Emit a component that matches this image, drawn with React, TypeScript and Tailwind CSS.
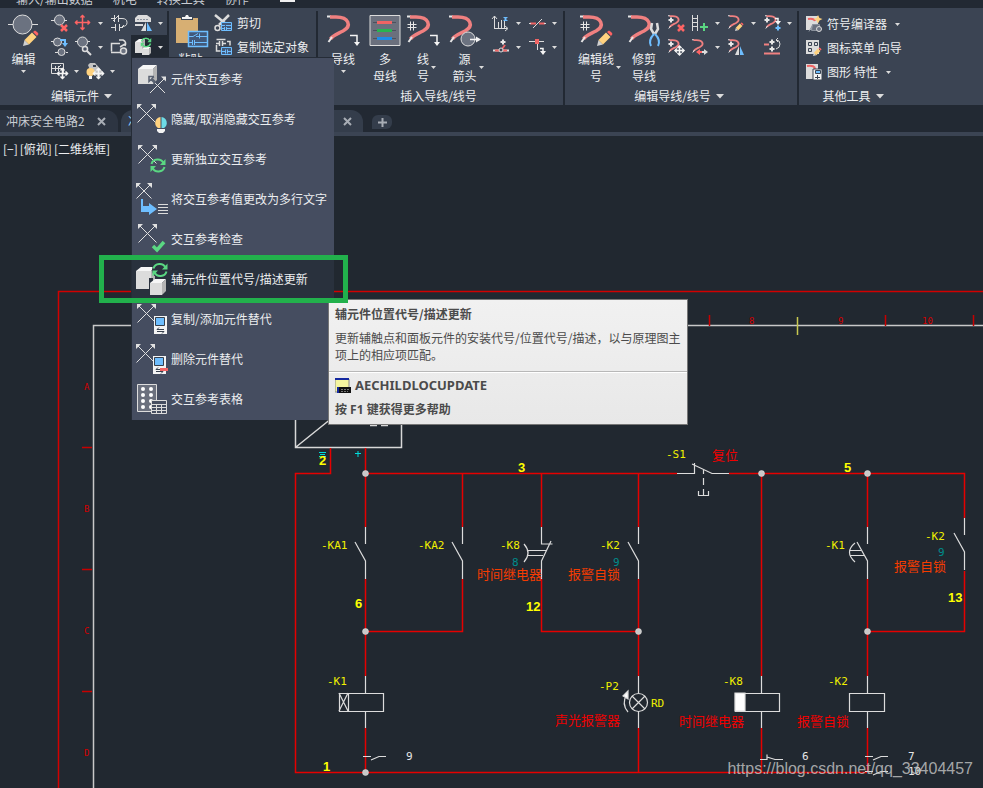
import type { ReactNode } from 'react';

type Point = { x: number; y: number };

const LIGHT = '#dcdcdc';
const PINK = '#f08080';
const BLUE = '#6ebeff';

/* ---------- icon parts ---------- */

function Icon({ size = 24, height, children }: { size?: number; height?: number; children: ReactNode }) {
  return (
    <svg
      width={size}
      height={height ?? size}
      viewBox={`0 0 ${size} ${height ?? size}`}
      fill="none"
      stroke={LIGHT}
      className="shrink-0 overflow-visible"
      aria-hidden="true"
    >
      {children}
    </svg>
  );
}

function Caret({ large = false }: { large?: boolean }) {
  return large ? (
    <svg width="8" height="5" viewBox="0 0 8 5" className="shrink-0" aria-hidden="true">
      <path d="M0 0h8L4 4.5z" fill="#dcdcdc" />
    </svg>
  ) : (
    <svg width="5" height="3" viewBox="0 0 5 3" className="shrink-0" aria-hidden="true">
      <path d="M0 0h5L2.500 3z" fill="#dcdcdc" />
    </svg>
  );
}

function Pencil({ x, y, scale = 1 }: Point & { scale?: number }) {
  return (
    <g transform={`translate(${x} ${y}) scale(${scale})`} stroke="none">
      <path d="M0 0L1.500-6 6-1.500z" fill="#d0d0d0" />
      <path d="M1.500-6L9-13.500 13.500-9 6-1.500z" fill="#ffd27f" />
      <path d="M10-14l2-1.500q3 1.500 3.500 3.500l-1.500 2z" fill="#ff6464" />
    </g>
  );
}

function Wire({ x = 0, y = 0, scale = 1 }: Partial<Point> & { scale?: number }) {
  return (
    <g transform={`translate(${x} ${y}) scale(${scale})`}>
      <path d="M0 1.500h4" stroke="#e6e6e6" strokeWidth="2" />
      <path d="M3 2h6C22 2 25 11 16 16 10 19 6 20 3.500 24" stroke={PINK} strokeWidth="3.500" />
      <path d="M5 22L1.500 27" stroke="#e6e6e6" strokeWidth="2" />
    </g>
  );
}

function Hash({ x, y, size = 9, color = '#e6e6e6' }: Point & { size?: number; color?: string }) {
  const a = Math.round(size / 3);
  const b = size - a;
  return (
    <path
      transform={`translate(${x + 0.5} ${y + 0.5})`}
      d={`M${a} 0v${size}M${b} 0v${size}M0 ${a}h${size}M0 ${b}h${size}`}
      stroke={color}
    />
  );
}

function MoveArrows({ x, y, r, color }: Point & { r: number; color: string }) {
  return (
    <g transform={`translate(${x} ${y})`} stroke={color} strokeWidth="1.500">
      <path d={`M0 ${-r}V${r}M${-r} 0H${r}`} />
      <path
        d={`M-2 ${2 - r}L0 ${-r}L2 ${2 - r}M-2 ${r - 2}L0 ${r}L2 ${r - 2}M${2 - r} -2L${-r} 0L${2 - r} 2M${r - 2} -2L${r} 0L${r - 2} 2`}
      />
    </g>
  );
}

function Cube({ x, y, w, h, depth }: Point & { w: number; h: number; depth: number }) {
  return (
    <g transform={`translate(${x} ${y})`} stroke="none">
      <path d={`M0 ${depth}H${w}V${h + depth}H0z`} fill="#dcdcdc" />
      <path d={`M0 ${depth}L${depth + 1} 0H${w + depth}L${w} ${depth}z`} fill="#f6f6f6" />
      <path d={`M${w} ${depth}L${w + depth} 0V${h}L${w} ${h + depth}z`} fill="#b4b4b4" />
    </g>
  );
}

function Refresh({ x, y, scale = 1 }: Point & { scale?: number }) {
  return (
    <g transform={`translate(${x} ${y}) scale(${scale})`}>
      <path d="M-6.500-1.500C-5-7 3-7.500 5.500-2.500M6.500 1.500C5 7-3 7.500-5.500 2.500" stroke="#5ad782" strokeWidth="2" />
      <path d="M7.500-6.500v6H2zM-7.500 6.500v-6H-2z" fill="#5ad782" stroke="none" />
    </g>
  );
}

function CrossArrows({ x, y, size = 18 }: Point & { size?: number }) {
  return (
    <g transform={`translate(${x} ${y})`} stroke="#e0e0e0">
      <path d={`M0 0L${size} ${size}M0 ${size}L${size} 0`} />
      <path d={`M-.5-.5h5l-5 5zM${size + 0.5}-.5h-5l5 5z`} fill="#e0e0e0" stroke="none" />
    </g>
  );
}

function Device({ x, y }: Point) {
  return (
    <g transform={`translate(${x} ${y})`}>
      <path d="M0 0h13v18H0z" fill="#f4f4f4" stroke="none" />
      <path d="M1.500 1.500h9v8h-9z" fill={BLUE} stroke="#37404d" />
      <path d="M3 13.500h7M3 13.500l2-2M3 15.500h7M10 15.500l-2 2" stroke="#37404d" />
    </g>
  );
}

function Turn({ x, y, size = 10 }: Point & { size?: number }) {
  return (
    <g transform={`translate(${x} ${y})`}>
      <path d={`M0 .5H${size - 3}V${size - 2}`} stroke="#f4f4f4" strokeWidth="1.500" />
      <path d={`M${size - 6} ${size - 3}h6l-3 4z`} fill="#f4f4f4" stroke="none" />
    </g>
  );
}

function Bulb({ x, y, r }: Point & { r: number }) {
  return (
    <g transform={`translate(${x} ${y})`} stroke="none">
      <path d={`M-.5 ${-r}A${r} ${r} 0 0 0 -3 ${r - 1}H-.5z`} fill="#ffd27f" />
      <path d={`M.5 ${-r}A${r} ${r} 0 0 1 3 ${r - 1}H.5z`} fill="#6edce6" />
      <path d={`M-4 ${r}H4V${r + 2}L2 ${r + 4}H-2L-4 ${r + 2}z`} fill="#f4f4f4" />
    </g>
  );
}

/* ---------- ribbon ---------- */

function ToolButton({ label, children }: { label: string; children: ReactNode }) {
  return (
    <button type="button" aria-label={label} className="flex h-6 w-6 items-center justify-center">
      <Icon>{children}</Icon>
    </button>
  );
}

function CaretButton({ label }: { label: string }) {
  return (
    <button type="button" aria-label={label} className="flex h-6 w-3 items-center justify-center pr-px">
      <Caret />
    </button>
  );
}

function LargeButton({
  lines,
  width,
  caret,
  children,
}: {
  lines: string[];
  width: string;
  caret?: 'below' | 'side';
  children: ReactNode;
}) {
  return (
    <button type="button" className={`flex h-[72px] flex-col items-center pt-1 ${width}`}>
      <Icon size={32}>{children}</Icon>
      <span className="mt-[3px] flex items-center">
        {caret === 'side' && <span className="w-[7px]" />}
        <span className="leading-[17px] whitespace-nowrap">
          {lines.map((line) => (
            <span key={line} className="block text-center">
              {line}
            </span>
          ))}
        </span>
        {caret === 'side' && (
          <span className="flex w-[7px] justify-end">
            <Caret />
          </span>
        )}
      </span>
      {caret === 'below' && (
        <span className="mt-[3px]">
          <Caret />
        </span>
      )}
    </button>
  );
}

function LabelButton({ label, caret = false, children }: { label: string; caret?: boolean; children: ReactNode }) {
  return (
    <button type="button" className="flex h-6 items-center whitespace-nowrap">
      <Icon>{children}</Icon>
      <span className="ml-px">{label}</span>
      {caret && (
        <span className="ml-2">
          <Caret />
        </span>
      )}
    </button>
  );
}

function Panel({ title, menu = false, children }: { title: string; menu?: boolean; children: ReactNode }) {
  return (
    <section className="flex shrink-0 flex-col border-r-2 border-[#222933] last:border-r-0">
      <div className="flex h-[72px]">{children}</div>
      <h2 className="flex h-[22px] items-center justify-center gap-[5px] pt-1 pr-1 whitespace-nowrap">
        {title}
        {menu && <Caret large />}
      </h2>
    </section>
  );
}

function EditPanel() {
  return (
    <Panel title="编辑元件" menu>
      <LargeButton lines={['编辑']} width="w-[47px]" caret="below">
        <path d="M0 9.500h5M24 9.500h6" />
        <circle cx="14.500" cy="9.500" r="9.500" fill="#6b7280" />
        <Pencil x={15} y={31} />
      </LargeButton>
      <div>
        <div className="flex">
          <ToolButton label="删除元件">
            <path d="M4 9.500h4M17 9.500h3" />
            <circle cx="12.500" cy="9" r="5" fill="#6b7280" />
            <path d="M14 14l6 6M20 14l-6 6" stroke="#ff6464" strokeWidth="2.500" />
          </ToolButton>
          <ToolButton label="移动元件">
            <MoveArrows x={11.5} y={11.5} r={7} color="#ff6464" />
          </ToolButton>
          <CaretButton label="移动选项" />
          <ToolButton label="反转触点">
            <path d="M4 7.500h3M7.500 4v7M11.500 4v7M12 7.500h3M6 10l6-6M4 16.500h4M8.500 13v7M12.500 13v7M13 16.500h3M15 7.500q5 0 5 4t-5 4M17 14l-2 2" />
          </ToolButton>
          <ToolButton label="PLC 编辑">
            <path d="M7 4h9l4 3v4H4V7z" fill="#dcdcdc" stroke="none" />
            <path d="M6 8.500h12" stroke="#8b929d" strokeDasharray="2 1" />
            <path d="M4 13h8v2H4z" fill="#dcdcdc" stroke="none" />
            <path d="M15 11v9h-5z" fill="#dcdcdc" stroke="none" />
            <path d="M16 11v9h5z" fill={BLUE} stroke="none" />
          </ToolButton>
          <CaretButton label="PLC 选项" />
        </div>
        <div className="flex">
          <ToolButton label="复制元件">
            <path d="M4 6.500h3M8 17.500h3M19 17.500h2" />
            <circle cx="10.500" cy="7" r="4" fill="#6b7280" />
            <circle cx="14.500" cy="17" r="3.500" fill="#6b7280" />
            <path d="M13 5h5v4" stroke={BLUE} strokeWidth="2" />
            <path d="M15 8h6l-3 4z" fill={BLUE} stroke="none" />
          </ToolButton>
          <ToolButton label="查找元件">
            <path d="M4 6.500h3M17 6.500h2" />
            <circle cx="11.500" cy="7" r="5" fill="#6b7280" />
            <circle cx="14" cy="14" r="2.500" fill="#454d60" strokeWidth="1.500" />
            <path d="M16 16l4 4" strokeWidth="2" />
          </ToolButton>
          <CaretButton label="查找选项" />
          <ToolButton label="切换电路">
            <path d="M13 8.500H4.500v8M4 17.500h10M12 5h4q4 2 2 6M13 12l5-3" strokeWidth="1.500" />
            <circle cx="16.500" cy="16" r="3" fill="#6b7280" strokeWidth="1.500" />
          </ToolButton>
          <div className="relative flex bg-[#222933]">
            <ToolButton label="交互参考">
              <Cube x={4} y={4} w={7} h={11} depth={3} />
              <Cube x={11} y={12} w={7} h={6} depth={2} />
              <Refresh x={15} y={7.5} scale={0.7} />
            </ToolButton>
            <CaretButton label="交互参考选项" />
            <CrossReferenceMenu />
          </div>
        </div>
        <div className="flex">
          <ToolButton label="移动电路">
            <path d="M4.500 4.500h12v10h-12zM4 9.500h12M8.500 7v5M11.500 7v5M14 6l-2 2" />
            <MoveArrows x={15.5} y={14.5} r={5} color="#f4f4f4" />
          </ToolButton>
          <CaretButton label="电路选项" />
          <ToolButton label="显示属性">
            <path d="M5 6l2-2h5l8 9-4 5-9-7z" fill="#c4c4c4" stroke="none" />
            <path d="M10 7h3" stroke="#3b4453" strokeWidth="2" />
            <circle cx="7.500" cy="13" r="4" fill="#ffd27f" stroke="none" />
            <path d="M6 17h3v3H6z" fill="#f4f4f4" stroke="none" />
            <MoveArrows x={15.5} y={14.5} r={5} color="#f4f4f4" />
          </ToolButton>
          <CaretButton label="属性选项" />
        </div>
      </div>
    </Panel>
  );
}

function ClipboardPanel() {
  return (
    <Panel title="">
      <LargeButton lines={['粘贴']} width="w-[43px]">
        <path d="M1 3h22v25H1z" fill="#d7af73" stroke="none" />
        <path d="M6 0h12v5H6z" fill="#3b4453" stroke="none" />
        <path d="M7 4V2h3l1-2h2l1 2h3v2z" fill="#f4f4f4" stroke="none" />
        <path d="M13.500 16.500h19v15h-19z" fill="#42597a" stroke={BLUE} strokeWidth="1.500" />
        <path d="M14 21.500h4l5-3M21 21.500h11M24.500 18.500v5M14 27.500h3M17.500 25v5M19.500 25v5M20 27.500h12" stroke={BLUE} />
      </LargeButton>
      <div className="pr-[7px]">
        <LabelButton label="剪切">
          <path d="M3 4l11 9M17 4L7 14" strokeWidth="2.500" />
          <circle cx="5.500" cy="17" r="2.500" strokeWidth="1.500" />
          <path d="M9.500 11.500h10v8h-10z" fill="#42597a" stroke={BLUE} />
          <path d="M10 14.500h3M14 14.500h5M10 17.500h2M12.500 16v3M14.500 16v3M15 17.500h4" stroke={BLUE} />
        </LabelButton>
        <LabelButton label="复制选定对象">
          <path d="M4.500 4.500h9M4 8.500h3M7.500 6v5M10.500 6v5M11 8.500h3M4.500 10v6h4M15 6.500h3v4" strokeWidth="1.500" />
          <path d="M9.500 12.500h10v7h-10z" fill="#42597a" stroke={BLUE} />
          <path d="M10 16.500h3M13.500 14.500v4M15.500 14.500v4M16 16.500h3" stroke={BLUE} />
        </LabelButton>
      </div>
    </Panel>
  );
}

function InsertPanel() {
  return (
    <Panel title="插入导线/线号">
      <div className="flex pr-[2px] pl-1">
        <LargeButton lines={['导线']} width="w-[42px]" caret="below">
          <Wire />
          <Turn x={23} y={20} />
        </LargeButton>
        <LargeButton lines={['多', '母线']} width="w-[42px]">
          <path d="M1 .5h30v30H1z" fill="#6b707d" />
          <path d="M4 7.500h23M4 15.500h23M4 23.500h23" stroke="#4b525f" />
          <path d="M8 7.500h15" stroke="#f06464" strokeWidth="3" />
          <path d="M8 15.500h15" stroke="#28b450" strokeWidth="3" />
          <path d="M8 23.500h15" stroke="#1e8ce6" strokeWidth="3" />
        </LargeButton>
        <LargeButton lines={['线', '号']} width="w-[34px]" caret="side">
          <Wire />
          <Hash x={0} y={6} />
          <Turn x={23} y={20} />
        </LargeButton>
        <LargeButton lines={['源', '箭头']} width="w-[49px]" caret="side">
          <Wire />
          <circle cx="19" cy="24" r="7" fill="#6b7280" />
          <path d="M21 24.500h8" stroke="#f4f4f4" strokeWidth="1.500" />
          <path d="M27 21.500v6l5-3z" fill="#f4f4f4" stroke="none" />
        </LargeButton>
        <div>
          <div className="flex">
            <ToolButton label="插入阶梯">
              <path d="M5.500 17.500V5M3 8l2.500-3L8 8M5 17.500h13M16 15l3 2.500-3 2.500M9.500 17v-6M12.500 17v-8M15.500 17v-8" />
              <path d="M14 6h5l-2 2 2 2h-5l2-2z" fill={BLUE} stroke="none" />
            </ToolButton>
            <CaretButton label="阶梯选项" />
            <ToolButton label="导线间隙">
              <path d="M5 12.500h6M14 12.500h6" stroke="#f06464" strokeWidth="2" />
              <path d="M8 17l9-9M4 12.500h2M19 12.500h2" />
            </ToolButton>
            <CaretButton label="间隙选项" />
          </div>
          <div className="flex">
            <ToolButton label="导线标记">
              <path d="M4 15.500h16" strokeWidth="2" />
              <path d="M6 15.500h4M14 15.500h4M13 14l3-4" stroke="#f06464" strokeWidth="2" />
              <circle cx="12" cy="15" r="2" fill="#3b4453" />
              <Hash x={11} y={4} size={5} />
            </ToolButton>
            <CaretButton label="标记选项" />
            <ToolButton label="T 形节点">
              <path d="M4 6.500h15M12.500 7v8" />
              <path d="M10 4h4v5h-4z" fill="#f06464" stroke="none" />
              <Turn x={15} y={13} size={6} />
            </ToolButton>
            <CaretButton label="节点选项" />
          </div>
        </div>
      </div>
    </Panel>
  );
}

function EditWiresPanel() {
  return (
    <Panel title="编辑导线/线号" menu>
      <div className="flex pr-px pl-[3px]">
        <LargeButton lines={['编辑线', '号']} width="w-[56px]" caret="side">
          <Wire />
          <Hash x={0} y={6} />
          <Pencil x={17} y={31} />
        </LargeButton>
        <LargeButton lines={['修剪', '导线']} width="w-[40px]">
          <Wire />
          <path d="M24 8l-1 6 3 5M29 8l1 6-3 5" strokeWidth="2.500" />
          <path d="M26 19q-6 6-3 12M27 19q6 6 3 12" stroke={BLUE} strokeWidth="2" />
        </LargeButton>
        <div>
          <div className="flex">
            <ToolButton label="删除线号">
              <Wire x={4} y={4} scale={0.5} />
              <Hash x={4} y={6} size={5} />
              <path d="M14 14l6 6M20 14l-6 6" stroke="#ff6464" strokeWidth="2.500" />
            </ToolButton>
            <ToolButton label="添加横档">
              <path d="M4.500 4v16M9.500 4v16M4 7.500h6M4 11.500h6M4 15.500h6" />
              <path d="M16 12v8M12 16h8" stroke="#5ad782" strokeWidth="2" />
            </ToolButton>
            <CaretButton label="横档选项" />
            <ToolButton label="编辑导线">
              <Wire x={4} y={4} scale={0.5} />
              <Pencil x={11} y={20} scale={0.55} />
            </ToolButton>
            <CaretButton label="编辑导线选项" />
            <ToolButton label="复制线号">
              <Wire x={5} y={4} scale={0.5} />
              <Hash x={4} y={6} size={5} />
              <Turn x={15} y={7} size={6} />
              <Hash x={15} y={14} size={5} color={BLUE} />
            </ToolButton>
            <CaretButton label="复制线号选项" />
          </div>
          <div className="flex">
            <ToolButton label="移动线号">
              <Wire x={4} y={4} scale={0.5} />
              <Hash x={4} y={6} size={5} />
              <MoveArrows x={15.5} y={15.5} r={4.5} color="#f4f4f4" />
            </ToolButton>
            <ToolButton label="拉伸导线">
              <Wire x={4} y={4} scale={0.5} />
              <path d="M8 17l4-3v2h2v2h-2v2z" fill="#ff6464" stroke="none" />
              <path d="M20 17l-4-3v2h-2v2h2v2z" fill="#dcdcdc" stroke="none" />
            </ToolButton>
            <CaretButton label="拉伸选项" />
            <ToolButton label="翻转线号">
              <Wire x={4} y={4} scale={0.5} />
              <Hash x={4} y={6} size={5} />
              <path d="M15 11v9h-4z" fill="#dcdcdc" stroke="none" />
              <path d="M16 11v9h4z" fill={BLUE} stroke="none" />
            </ToolButton>
            <span className="w-3" />
            <ToolButton label="切换线号位置">
              <path d="M4 9.500h5M4 18.500h16" stroke={PINK} strokeWidth="2" />
              <Hash x={9} y={4} size={5} />
              <Hash x={9} y={11} size={5} />
              <path d="M16 5q4 0 4 4t-4 5M18 3l-2 2 2 2" />
            </ToolButton>
          </div>
        </div>
      </div>
    </Panel>
  );
}

function OtherToolsPanel() {
  return (
    <Panel title="其他工具" menu>
      <div className="flex w-28 flex-col items-start pt-px pl-[3px]">
        <LabelButton label="符号编译器" caret>
          <path d="M4 4h12v14H4z" fill="#dcdcdc" stroke="none" />
          <path d="M6 7q6-1 7 2" stroke="#f06464" strokeWidth="2" />
          <path d="M16 3l1.500 3 3 1-3 1.500-1.500 3-1.500-3-3-1.500 3-1z" fill="#ffd27f" stroke="none" />
          <path d="M10.500 12.500h7v6h-8zM7 19.500l4-7" fill="#6b7280" stroke="#8b929d" />
          <circle cx="17" cy="17" r="2.500" fill="#6b7280" />
        </LabelButton>
        <LabelButton label="图标菜单 向导">
          <path d="M4 4h13v14H4z" fill="#dcdcdc" stroke="none" />
          <path d="M6.500 6.500h3v3h-3zM12.500 6.500h3v3h-3zM6.500 12.500h3v3h-3z" stroke="#3b4453" />
          <Pencil x={11} y={20} scale={0.55} />
        </LabelButton>
        <LabelButton label="图形 特性" caret>
          <path d="M4 4h12v15H4z" fill="#dcdcdc" stroke="none" />
          <path d="M5 6q8-1 8 3" stroke="#f06464" strokeWidth="2" />
          <path d="M11 9h9v11h-9z" fill="#f4f4f4" stroke="#3b4453" />
          <path d="M13.500 10.500h5v3h-5z" fill={BLUE} stroke="#3b4453" />
          <path d="M13 17.500h5M15.500 15v4" stroke="#3b4453" />
        </LabelButton>
      </div>
    </Panel>
  );
}

/* ---------- cross reference menu ---------- */

const MENU_ITEMS: { label: string; icon: ReactNode }[] = [
  {
    label: '元件交互参考',
    icon: (
      <>
        <Cube x={4} y={6} w={15} h={15} depth={4} />
        <path d="M31 34L15 18M16 34L31 19" stroke="#e0e0e0" />
        <path d="M32 17.500h-5l5 5z" fill="#e0e0e0" stroke="none" />
        <path d="M20 17.500h-5v5l2-2 4 4M20 17.500l-2 2 4 4" stroke="#5a6272" strokeWidth="1.500" />
      </>
    ),
  },
  {
    label: '隐藏/取消隐藏交互参考',
    icon: (
      <>
        <CrossArrows x={3.5} y={5.5} />
        <Bulb x={27} y={24} r={6} />
      </>
    ),
  },
  {
    label: '更新独立交互参考',
    icon: (
      <>
        <CrossArrows x={4.5} y={6.5} />
        <Refresh x={24} y={26.5} />
      </>
    ),
  },
  {
    label: '将交互参考值更改为多行文字',
    icon: (
      <>
        <CrossArrows x={2.5} y={4.5} size={15} />
        <path d="M7 20h2v7h6v-3l8 6-8 6v-3H7z" fill={BLUE} stroke="none" />
        <path d="M24 25.500h10M24 28.500h10M24 31.500h10M24 34.500h10" />
      </>
    ),
  },
  {
    label: '交互参考检查',
    icon: (
      <>
        <CrossArrows x={4.5} y={5.5} />
        <path d="M19 27l4 4 7-8" stroke="#5ad782" strokeWidth="3.500" />
      </>
    ),
  },
  {
    label: '辅元件位置代号/描述更新',
    icon: (
      <>
        <Cube x={2} y={8} w={15} h={18} depth={4} />
        <path d="M15 19h4v16h-4z" fill="#29313d" stroke="none" />
        <Cube x={16} y={20} w={12} h={12} depth={4} />
        <circle cx="26" cy="11" r="8" fill="#29313d" stroke="none" />
        <Refresh x={26} y={11} />
      </>
    ),
  },
  {
    label: '复制/添加元件替代',
    icon: (
      <>
        <CrossArrows x={3.5} y={5.5} />
        <Device x={20} y={17} />
      </>
    ),
  },
  {
    label: '删除元件替代',
    icon: (
      <>
        <CrossArrows x={2.5} y={5.5} />
        <Device x={19} y={17} />
        <path d="M26 30.500h8" stroke="#f06464" strokeWidth="3" />
      </>
    ),
  },
  {
    label: '交互参考表格',
    icon: (
      <>
        <path d="M3.500 5.500h19v27h-19z" fill="#6b707d" />
        <g fill="#ffffff" stroke="none">
          {[10, 16, 22, 28].map((y) => (
            <g key={y}>
              <circle cx="9" cy={y} r="2" />
              <circle cx="17" cy={y} r="2" />
            </g>
          ))}
        </g>
        <path d="M17.500 21.500h15v13h-15z" fill="#454d60" />
        <path d="M17 25.500h16M17 28.500h16M17 31.500h16M22.500 25v9M27.500 25v9" />
      </>
    ),
  },
];

const ACTIVE_ITEM = '辅元件位置代号/描述更新';

function CrossReferenceMenu() {
  return (
    <ul role="menu" className="absolute top-[22px] left-0 z-20 w-[203px] border-t border-l border-[#252c37] bg-[#454d60] pt-px pb-px">
      {MENU_ITEMS.map(({ label, icon }) => (
        <li key={label} role="none" className="relative">
          <button
            type="button"
            role="menuitem"
            className={`flex h-10 w-full items-center pl-0.5 whitespace-nowrap ${label === ACTIVE_ITEM ? 'bg-[#29313d]' : ''}`}
          >
            <Icon size={36} height={40}>
              {icon}
            </Icon>
            <span className="ml-px">{label}</span>
          </button>
          {label === ACTIVE_ITEM && (
            <>
              <CommandTooltip />
              <span className="absolute -top-1 -right-[14px] -bottom-1 -left-[33px] z-30 border-[5px] border-[#22b14c]" />
            </>
          )}
        </li>
      ))}
    </ul>
  );
}

function CommandTooltip() {
  return (
    <div
      role="tooltip"
      className="absolute top-10 left-[196px] z-20 w-[360px] border border-[#767676] bg-linear-to-b from-[#f1f1f1] to-[#e8e8e8] text-[#4b4b4b]"
    >
      <div className="border-b border-[#b8b8b8] pt-[5px] pr-1 pb-2 pl-[6px]">
        <h3 className="leading-[17px] font-bold">辅元件位置代号/描述更新</h3>
        <p className="mt-[7px] leading-[17px]">更新辅触点和面板元件的安装代号/位置代号/描述，以与原理图主项上的相应项匹配。</p>
      </div>
      <div className="border-t border-white pt-1 pr-1 pb-[5px] pl-[6px] font-['Noto_Sans','Noto_Sans_CJK_SC',sans-serif] font-bold">
        <div className="flex h-[18px] items-center gap-1">
          <svg width="16" height="16" viewBox="0 0 16 16" aria-hidden="true">
            <path d="M0 1h14v13H0z" fill="#f5f5a0" stroke="#888888" />
            <path d="M0 0h14v2H0z" fill="#1428a0" />
            <path d="M2 9h14v6H2z" fill="#111111" />
            <path d="M2 9h2v6H2z" fill="#1428a0" />
            <path d="M6 11.500h8M6 13.500h7" stroke="#777777" strokeDasharray="2 1" />
          </svg>
          <span className="text-[13px]">AECHILDLOCUPDATE</span>
        </div>
        <p className="mt-[6px] leading-[18px]">按 F1 键获得更多帮助</p>
      </div>
    </div>
  );
}

/* ---------- schematic ---------- */

const WIRES = [
  'M330.500 448V473.500H295.500V772.500H867',
  'M365.500 448V527M365.500 579V676M365.500 728V772',
  'M365 473.500H677M729 473.500H964.500V518',
  'M462.500 473V527M462.500 579V631.500H365',
  'M541.500 473V527M541.500 579V631.500H638',
  'M638.500 473V527M638.500 579V676M638.500 728V772',
  'M761.500 473V676M761.500 728V772',
  'M867.500 473V527M867.500 579V676M867.500 728V772',
  'M964.500 571V631.500H867',
];

const NODES: [number, number][] = [
  [365, 473], [761, 473], [867, 473], [365, 631], [638, 631], [867, 631], [365, 772],
];

const TAGS: [string, number, number][] = [
  ['-KA1', 321, 549], ['-KA2', 418, 549], ['-K8', 500, 549], ['-K2', 600, 549], ['-S1', 666, 458],
  ['-K1', 825, 549], ['-K2', 925, 540], ['-K1', 327, 685], ['-P2', 599, 690], ['RD', 651, 707],
  ['-K8', 723, 685], ['-K2', 828, 685],
];

const WIRE_NUMBERS: [string, number, number][] = [
  ['2', 319, 465], ['3', 518, 472], ['5', 844, 472], ['6', 355, 608], ['12', 526, 611], ['13', 948, 602], ['1', 323, 771],
];

const REFERENCES: [string, number, number][] = [
  ['8', 512, 566], ['9', 613, 566], ['9', 938, 556],
];

const CONTACT_NUMBERS: [string, number, number][] = [
  ['9', 406, 760], ['6', 802, 760], ['7', 908, 760], ['10', 908, 775],
];

const NOTES: [string, number, number, string][] = [
  ['时间继电器', 477, 579, '#f53c00'],
  ['报警自锁', 568, 579, '#f53c00'],
  ['报警自锁', 894, 571, '#f53c00'],
  ['复位', 712, 460, '#f00000'],
  ['声光报警器', 555, 725, '#f00000'],
  ['时间继电器', 679, 726, '#f00000'],
  ['报警自锁', 797, 726, '#f00000'],
];

function OpenContact({ x, y }: Point) {
  return <path d={`M${x + 0.5} ${y}v17M${x - 10} ${y + 15}l10.500 19v18`} />;
}

function Coil({ x, width }: { x: number; width: number }) {
  return <path d={`M${x + 0.5} 693.500h${width}v18h${-width}z`} />;
}

function Schematic() {
  return (
    <svg width="983" height="652" viewBox="0 136 983 652" fill="none" className="block">
      {/* sheet frame */}
      <path d="M983 291.500H58.500V788" stroke="#d20000" strokeWidth="1.500" />
      <path d="M983 325.500H93.500V788" stroke="#c8c8c8" strokeWidth="1.500" />
      <path
        d="M82 447.500h10M82 569.500h10M82 691.500h10M709.500 315v11M885.500 315v11M973.500 315v11"
        stroke="#c80000"
        strokeWidth="1.500"
      />
      <path d="M797.500 317v18" stroke="#c8c850" strokeWidth="1.500" />
      <g fill="#d20000" className="font-['DejaVu_Sans_Mono',monospace] text-[9px]">
        <text x="84" y="390">A</text>
        <text x="84" y="512">B</text>
        <text x="84" y="634">C</text>
        <text x="84" y="756">D</text>
        <text x="749" y="324">8</text>
        <text x="838" y="324">9</text>
        <text x="922" y="324">10</text>
      </g>

      {/* power supply */}
      <path d="M295.500 400V447.500H401.500V400M296 447L332 418" stroke="#d8d8d8" strokeWidth="1.500" />
      <path d="M370 425.500h7M381 425.500h7" stroke="#d8d8d8" strokeWidth="1.500" />
      <path d="M319 452.500h7M320 454.500h5M319 456.500h7M355 453.500h6M358 451v6" stroke="#00dcdc" />

      <path d={WIRES.join('')} stroke="#e60000" strokeWidth="1.500" />

      <g stroke="#dcdcdc" strokeWidth="1.200">
        <OpenContact x={365} y={527} />
        <OpenContact x={462} y={527} />
        <OpenContact x={638} y={527} />
        <OpenContact x={867} y={527} />
        <OpenContact x={964} y={518} />

        {/* timed contacts */}
        <path d="M541.500 527v17h11M551 541l-9.500 20v18M524 544q8 9 0 18M528 550.500h18M528 555.500h15" />
        <path d="M855 543q-11 9 0 19M850 550.500h11M850 555.500h14" />

        {/* reset push button */}
        <path d="M677 473.500h17.500V463M692 464l20 9.500h17M703.500 470v4M703.500 478v7M703.500 489v6M698.500 491v4.500h10V491" />

        <path d="M365.500 676v17M365.500 711v17M638.500 676v17M638.500 711v17M761.500 676v17M761.500 711v17M867.500 676v17M867.500 711v17" />
        <Coil x={339} width={44} />
        <path d="M348.500 693v18M339 693l9 18M348 693l-9 18" />
        <Coil x={735} width={44} />
        <path d="M735 693h10v18h-10z" fill="#ffffff" />
        <Coil x={849} width={35} />

        {/* alarm lamp */}
        <circle cx="638.500" cy="702.500" r="9" />
        <path d="M632 696l13 13M645 696l-13 13M628 712q-7-8-1-18" />
        <path d="M628 691l-5 5 5 3z" fill="#ffffff" />

        <path d="M363 756.500h8M371 760l8-3.500h7M760 759.500h7v-5M767 757l8 2.500h8M865 756.500h8M873 760l8-3.500h7M865 771.500h8M873 775l8-3.500h7" />
      </g>

      {NODES.map(([x, y]) => (
        <circle key={`${x}-${y}`} cx={x + 0.5} cy={y + 0.5} r="3" fill="#c8c8c8" stroke="#e6e6e6" strokeWidth=".5" />
      ))}

      <g className="font-['DejaVu_Sans_Mono',monospace] text-[11px]">
        <g fill="#f0f000">
          {TAGS.map(([text, x, y]) => (
            <text key={`${x}-${y}`} x={x} y={y}>{text}</text>
          ))}
        </g>
        <g fill="#008c8c">
          {REFERENCES.map(([text, x, y]) => (
            <text key={`${x}-${y}`} x={x} y={y}>{text}</text>
          ))}
        </g>
        <g fill="#e6e6e6">
          {CONTACT_NUMBERS.map(([text, x, y]) => (
            <text key={`${x}-${y}`} x={x} y={y}>{text}</text>
          ))}
        </g>
      </g>
      <g fill="#ffff00" className="font-['Liberation_Sans_Narrow','Liberation_Sans',sans-serif] text-[13px] font-bold">
        {WIRE_NUMBERS.map(([text, x, y]) => (
          <text key={`${x}-${y}`} x={x} y={y}>{text}</text>
        ))}
      </g>
      <g className="text-[13px]">
        {NOTES.map(([text, x, y, color]) => (
          <text key={`${x}-${y}`} x={x} y={y} fill={color}>{text}</text>
        ))}
      </g>
    </svg>
  );
}

/* ---------- window ---------- */

function CloseIcon() {
  return (
    <svg width="9" height="9" viewBox="0 0 9 9" stroke="#a8adb5" strokeWidth="2" aria-hidden="true">
      <path d="M1 1l7 7M8 1L1 8" />
    </svg>
  );
}

function DocumentTabs() {
  return (
    <div className="flex h-[27px] items-end bg-[#222933]">
      <div className="flex h-[22px] w-[118px] items-center justify-between rounded-tr-xl bg-[#2d3542] pr-3 pl-[6px] whitespace-nowrap text-[#c8ccd2]">
        <button type="button">冲床安全电路2</button>
        <button type="button" aria-label="关闭 冲床安全电路2">
          <CloseIcon />
        </button>
      </div>
      <div className="ml-[3px] flex h-[22px] w-[242px] items-center justify-between rounded-t-xl bg-[#343d4b] pr-[11px] pl-[7px] text-[#8cc8ff]">
        <button type="button">冲床</button>
        <button type="button" aria-label="关闭当前图形">
          <CloseIcon />
        </button>
      </div>
      <button
        type="button"
        aria-label="新建图形"
        className="mb-[3px] ml-[9px] flex h-[14px] w-5 items-center justify-center rounded-md rounded-bl-none bg-[#343d4b]"
      >
        <svg width="9" height="9" viewBox="0 0 9 9" stroke="#a8adb5" strokeWidth="2" aria-hidden="true">
          <path d="M4.500 0v9M0 4.500h9" />
        </svg>
      </button>
    </div>
  );
}

export default function App() {
  return (
    <div className="flex min-h-screen flex-col overflow-hidden bg-[#212830] font-['Noto_Sans_CJK_SC',sans-serif] text-xs text-[#eceef0]">
      <header className="relative z-10">
        <nav className="flex h-2 items-end gap-5 overflow-hidden bg-[#222933] pb-px pl-4 leading-4 whitespace-nowrap text-[#c8ccd2]">
          <a href="#io">输入/输出数据</a>
          <a href="#machine">机电</a>
          <a href="#convert">转换工具</a>
          <a href="#share">协作</a>
          <span className="ml-[11px] h-0.5 w-[15px] self-start bg-[#f0f0f0]" />
        </nav>
        <div className="flex bg-[#3b4453] pt-[3px]">
          <EditPanel />
          <ClipboardPanel />
          <InsertPanel />
          <EditWiresPanel />
          <OtherToolsPanel />
        </div>
        <DocumentTabs />
        <div className="h-1 bg-[#3b4453]" />
      </header>

      <main className="relative flex-1 overflow-hidden">
        <Schematic />
        <div className="absolute top-1 left-[3px] flex gap-0.5 leading-[18px]">
          <button type="button">[−]</button>
          <button type="button">[俯视]</button>
          <button type="button">[二维线框]</button>
        </div>
        <span className="absolute right-[10px] bottom-[9px] font-['Liberation_Sans',sans-serif] text-base leading-5 text-[#c8c8c8]/80">
          https://blog.csdn.net/qq_33404457
        </span>
      </main>
    </div>
  );
}
